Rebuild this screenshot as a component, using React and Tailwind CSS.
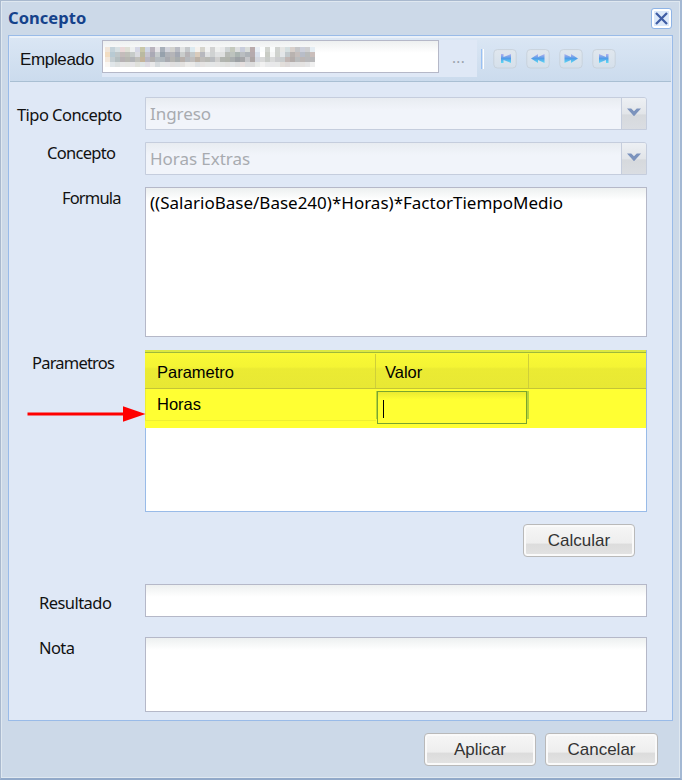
import React from "react";

const ui = "font-['Noto_Sans',sans-serif] text-[16.5px] leading-[22px] whitespace-nowrap text-[#111]";
const arial = "font-['Liberation_Sans',Arial,sans-serif] whitespace-nowrap";
const field = "border border-[#b5b8c8] bg-white bg-[linear-gradient(to_bottom,#edf0f0,#ffffff_12px)]";

const mosaic = [
  ["#f1e6da", "#c5d3da", "#d7e0e3", "#ead9d9", "#dfe0d6", "#eef0f0", "#d5d7e5", "#c8c7a8", "#cfd6e5", "#b9b3bd", "#e6e4e8", "#a8b0ba", "#d2d4dc", "#d2d2ce", "#b9bcc4", "#e1e3e3", "#c5c9cc", "#dceaf0", "#f5f2ee", "#d5d4cc", "#f1f2f2", "#d1d2d2", "#eef0ef", "#e9eaeb", "#cfd4d5", "#c4c9bd", "#dddfe0", "#c8cddb", "#d9ddda", "#b9abac", "#e8eef5", "#fbfdfd", "#d2d5d0", "#fafcfc", "#d0d3d0", "#e6e7e5", "#d5dfe0", "#d8d0cb", "#c5c6c8", "#cdd0db", "#cfd0d2", "#e4edf3"],
  ["#f2ddc2", "#b8cad3", "#bfc7c9", "#c4bcbb", "#bfc0b9", "#c6cbc9", "#dadbe0", "#b9b9a0", "#c6c4cf", "#aaa9b5", "#c5cacc", "#96a1ac", "#afb2b8", "#b5b5b8", "#a3a8b2", "#cacdcc", "#b7b4b7", "#c3c9cb", "#d9cbbb", "#b7b8be", "#dfe1e2", "#cfd2d2", "#dfe1e2", "#dfe0e0", "#b8bbb6", "#bdc3be", "#aab4b1", "#babec1", "#aeb3b8", "#b5aaad", "#d8dfea", "#ffffff", "#c9ccc5", "#f5f6f6", "#cfd2ce", "#e3e6e8", "#c2c9cc", "#b9b3b0", "#c5bebc", "#b8bdc8", "#b9bbbb", "#cabebb"],
  ["#f3e8dc", "#c4cdd1", "#b5bfc1", "#b7b2b4", "#b7b7b1", "#b2b4b8", "#c0c0bb", "#c4b49b", "#b8b7c2", "#b3b1b0", "#b5bbc0", "#b0b8be", "#a8aab0", "#b5b5b2", "#a8adae", "#b8b0ab", "#b6b9bd", "#c0bebd", "#bbb1a6", "#bfbdba", "#b9bab5", "#b9bcc0", "#d0d0cf", "#b2b5b0", "#b1b4ac", "#a9aeaf", "#9ca1a5", "#a5a6a8", "#c5c6c9", "#ada5a4", "#d4d7df", "#d9dada", "#c9ccc9", "#d9dada", "#cccdcf", "#c9cdce", "#c1b7b4", "#b4adab", "#babcbd", "#bdb7b5", "#b9b9bb", "#b9b9bb"],
  ["#faf7f3", "#e0e6e9", "#dde1e1", "#e5e5e5", "#e4e5e2", "#e5e4e7", "#dfe0db", "#dfe5e6", "#dfdde4", "#e8e8e9", "#d5dadd", "#e2e5e5", "#e3e3e6", "#e0dfdf", "#dee0e1", "#e3e1df", "#ecebe9", "#e9e9e8", "#dee1e3", "#e5e3e2", "#e5e6e5", "#e4e6e7", "#e5e5e5", "#e2e4e2", "#e1e1df", "#e1e4e6", "#dedfe0", "#e5dfdf", "#dcdddf", "#dddddd", "#e8eae8", "#f1f1f1", "#e9eaeb", "#e8e8ea", "#e8e9e9", "#e2deda", "#dedad9", "#e1e1e2", "#e2e2e2", "#e4e2e1", "#e5e5e6", "#f0f0f0"],
];

function Mosaic() {
  return (
    <div className="grid grid-cols-[repeat(42,5px)] auto-rows-[5px] ml-[2px] mt-[6px]">
      {mosaic.flat().map((c, i) => <span key={i} style={{ backgroundColor: c }} />)}
    </div>
  );
}

function NavButton({ kind }) {
  const shapes = {
    first: <path d="M8 5h2.5v3L18 5v9l-7.500-3v3H8z" />,
    prev: <path d="M5 9.500L12 5v3l6.500-3v9L12 11v3z" />,
    next: <path d="M19 9.500L12 5v3L5.500 5v9l6.500-3v3z" />,
    last: <path d="M16.500 5H14v3L7 5v9l7-3v3h2.500z" />,
  };
  return (
    <svg width="24" height="20" viewBox="0 0 24 20">
      <defs>
        <linearGradient id={"g" + kind} x1="0" y1="5" x2="0" y2="14" gradientUnits="userSpaceOnUse">
          <stop offset="0" stopColor="#b5b0ee" /><stop offset=".5" stopColor="#529de8" /><stop offset="1" stopColor="#5edcf5" />
        </linearGradient>
        <linearGradient id={"b" + kind} x1="0" y1="0" x2="0" y2="1">
          <stop offset="0" stopColor="#e0e7ee" /><stop offset="1" stopColor="#d5e0eb" />
        </linearGradient>
      </defs>
      <rect x=".8" y=".6" width="22.400" height="18.400" rx="3.5" fill={`url(#b${kind})`} stroke="#c8d2dc" />
      <g fill={`url(#g${kind})`}>{shapes[kind]}</g>
    </svg>
  );
}

function Label({ children, className }) {
  return <div className={`${ui} ${className}`}>{children}</div>;
}

function Combo({ value, tracking }) {
  return (
    <div className="flex h-[33px] w-[502px] shrink-0 overflow-hidden rounded-tr-[3px] border border-[#c5cddd] bg-[linear-gradient(to_bottom,#e8ecf1,#f1f4fa_12px)]">
      <div className={`flex-1 pl-[4px] pt-[5px] font-['Noto_Sans',sans-serif] text-[17px] leading-[22px] text-[#a8abb0] ${tracking}`}>{value}</div>
      <div className="flex w-[25px] justify-center border-l border-[#c5cddd] bg-[linear-gradient(to_bottom,#edf0f4,#e2e5e9_50%,#d6d9dd_55%,#dadde2)] pr-[1px] pt-[10px]">
        <svg width="14" height="9" viewBox="0 0 14 9"><path d="M0 .5h4.200L7 3.300 9.800.5H14L7 8.300z" fill="#7c93bd" /></svg>
      </div>
    </div>
  );
}

function Button({ children, className }) {
  return (
    <button className={`${arial} ${className} flex h-[33px] items-center justify-center rounded-[4px] border border-[#b9b9b9] bg-[linear-gradient(to_bottom,#f6f6f6,#eeeeee_58%,#dcdcdc_62%,#e3e3e3)] text-[17px] text-[#333] shadow-[inset_0_0_0_2px_#fafafa]`}>
      {children}
    </button>
  );
}

export default function App() {
  return (
    <div className="flex h-[780px] w-[682px] flex-col overflow-hidden border border-[#a9b9ce] border-r-2 border-b-2 border-r-[#a3b8d3] border-b-[#91a9c9] bg-[#ccd9e8] shadow-[inset_1px_1px_0_#dfe8f0,inset_-1px_-1px_0_#dfe8f0]">
      <header className="flex h-[34px] items-center justify-between pl-[7px] pr-[8px]">
        <h1 className="font-['Noto_Sans',sans-serif] text-[16.5px] font-bold leading-[22px] tracking-[0.05px] text-[#15428b]">Concepto</h1>
        <button className="flex h-[21px] w-[21px] items-center justify-center rounded-[3px] border border-[#8fb4e6] bg-[#dce9fa] shadow-[inset_0_0_0_2px_white]">
          <svg width="13" height="13" viewBox="0 0 13 13"><path d="M1 1l11 11M12 1L1 12" stroke="#405ea5" strokeWidth="2.3" /></svg>
        </button>
      </header>

      <main className="ml-[7px] flex h-[686px] w-[665px] shrink-0 flex-col border border-[#99bbe8] bg-[#dfe8f6]">
        <div className="mx-px flex h-[46px] border-b border-t-2 border-b-[#a9bfd3] border-t-[#eaf1f9] bg-[linear-gradient(to_bottom,#dae6f4,#cbdbed)]">
          <div className={`${arial} w-[92px] pl-[10px] pt-[12px] text-[17px] leading-[20px] tracking-[-0.350px] text-[#111]`}>Empleado</div>
          <div className="mt-[2px] h-[37px] w-[375px] bg-[#dfe8f6]">
            <div className="flex">
              <div className={`h-[33px] w-[337px] ${field}`}><Mosaic /></div>
              <span className="ml-[13px] mt-[6px] text-[15px] tracking-[0.3px] text-[#9aa2ac]">...</span>
            </div>
          </div>
          <div className="ml-[4px] mt-[11px] h-[20px] w-[3px] border-l border-r border-l-[#98c0f4] border-r-white" />
          <div className="ml-[9px] mt-[11px] flex gap-[9px]">
            <NavButton kind="first" /><NavButton kind="prev" /><NavButton kind="next" /><NavButton kind="last" />
          </div>
        </div>

        <div className="mt-[15px] flex h-[33px]">
          <Label className="w-[136px] pl-[8px] pt-[7px] tracking-[-0.550px]">Tipo Concepto</Label>
          <Combo value="Ingreso" tracking="tracking-[-0.050px]" />
        </div>
        <div className="mt-[12px] flex h-[33px]">
          <Label className="w-[136px] pl-[38px] tracking-[-0.700px]">Concepto</Label>
          <Combo value="Horas Extras" tracking="tracking-[-0.050px]" />
        </div>
        <div className="mt-[12px] flex h-[150px]">
          <Label className="w-[136px] pl-[53px] tracking-[-0.850px]">Formula</Label>
          <div className={`w-[502px] pl-[4px] pt-[4px] ${field}`}>
            <div className="font-['Noto_Sans',sans-serif] text-[17px] leading-[22px] whitespace-nowrap">((SalarioBase/Base240)*Horas)*FactorTiempoMedio</div>
          </div>
        </div>
        <div className="mt-[13px] flex h-[162px]">
          <div className="relative w-[136px]">
            <Label className="pl-[23px] pt-[2px] tracking-[-0.800px]">Parametros</Label>
            <svg className="absolute left-[18px] top-[55px]" width="120" height="18" viewBox="0 0 120 18">
              <path d="M.5 9h98" stroke="#f00" strokeWidth="3.2" /><path d="M96 1.3L118.5 9 96 16.7z" fill="#f00" />
            </svg>
          </div>
          <div className={`${arial} flex w-[502px] flex-col border-b border-r border-[#99bbe8] bg-white text-[16.5px] leading-[20px]`}>
            <div className="h-[2px] w-[501px] bg-[#dbe842]" />
            <div className="flex h-[37px] border-b border-t border-b-[#c4c437] border-t-[#9db83c] bg-[linear-gradient(to_bottom,#fafa35,#f4f434_40%,#ebeb33_45%,#e8e834)] text-black">
              <div className="mt-[1px] w-[231px] border-r border-[#cfcf38] pl-[12px] pt-[8px]">Parametro</div>
              <div className="mt-[1px] w-[153px] border-r border-[#cfcf38] pl-[9px] pt-[8px]">Valor</div>
            </div>
            <div className="flex h-[39px] w-[501px] bg-[#ffff33]">
              <div className="h-[32px] w-[231px] border-b border-l border-[#eeee32] pl-[11px] pt-[5px] text-black">Horas</div>
              <div className="mt-[2px] h-[28px] w-[153px] border-l border-r-2 border-[#b8d437]">
                <div className="h-[33px] w-[150px] border border-[#7aa52e] bg-[linear-gradient(to_bottom,#eaea31,#ffff33_8px)] pl-[5px] pt-[8px]">
                  <div className="h-[18px] w-px bg-black" />
                </div>
              </div>
            </div>
            <div className="flex-1 border-l border-[#99bbe8]" />
          </div>
        </div>
        <div className="mt-[12px] flex h-[33px] justify-end pr-[37px]">
          <Button className="w-[112px]">Calcular</Button>
        </div>
        <div className="mt-[27px] flex h-[33px]">
          <Label className="w-[136px] pl-[30px] pt-[8px] tracking-[-0.550px]">Resultado</Label>
          <div className={`w-[502px] ${field}`} />
        </div>
        <div className="mt-[20px] flex h-[75px]">
          <Label className="w-[136px] pl-[30px] tracking-[-0.600px]">Nota</Label>
          <div className={`w-[502px] ${field}`} />
        </div>
      </main>

      <footer className="flex justify-end gap-[9px] pr-[22px] pt-[12px]">
        <Button className="w-[112px]">Aplicar</Button>
        <Button className="w-[113px]">Cancelar</Button>
      </footer>
    </div>
  );
}
